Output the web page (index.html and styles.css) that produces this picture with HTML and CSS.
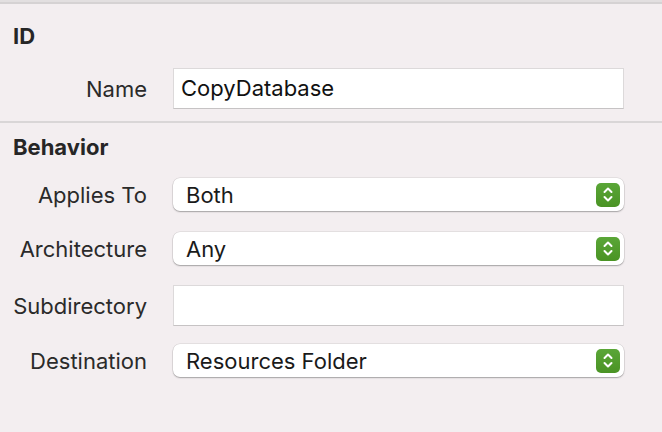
FILE: index.html
```html
<!DOCTYPE html>
<html>
<head>
<meta charset="utf-8">
<link rel="stylesheet" href="styles.css">
</head>
<body>
<div class="panel">
  <section class="section id-section">
    <h2 class="heading">ID</h2>
    <div class="row row-name">
      <label class="label">Name</label>
      <div class="field">CopyDatabase</div>
    </div>
  </section>
  <section class="section behavior-section">
    <h2 class="heading">Behavior</h2>
    <div class="row row-applies">
      <label class="label">Applies To</label>
      <div class="select"><span class="value">Both</span><span class="stepper"><svg width="12" height="17" viewBox="0 0 12 17"><path d="M2.5 6 L6 2.5 L9.5 6 M2.5 11 L6 14.5 L9.5 11" fill="none" stroke="#fff" stroke-width="2" stroke-linecap="round" stroke-linejoin="round"/></svg></span></div>
    </div>
    <div class="row row-arch">
      <label class="label">Architecture</label>
      <div class="select"><span class="value">Any</span><span class="stepper"><svg width="12" height="17" viewBox="0 0 12 17"><path d="M2.5 6 L6 2.5 L9.5 6 M2.5 11 L6 14.5 L9.5 11" fill="none" stroke="#fff" stroke-width="2" stroke-linecap="round" stroke-linejoin="round"/></svg></span></div>
    </div>
    <div class="row row-sub">
      <label class="label">Subdirectory</label>
      <div class="field"></div>
    </div>
    <div class="row row-dest">
      <label class="label">Destination</label>
      <div class="select"><span class="value">Resources Folder</span><span class="stepper"><svg width="12" height="17" viewBox="0 0 12 17"><path d="M2.5 6 L6 2.5 L9.5 6 M2.5 11 L6 14.5 L9.5 11" fill="none" stroke="#fff" stroke-width="2" stroke-linecap="round" stroke-linejoin="round"/></svg></span></div>
    </div>
  </section>
</div>
</body>
</html>
```
FILE: styles.css
```css
html, body {
  margin: 0;
  padding: 0;
  background: #f3eef0;
}
body {
  width: 662px;
  height: 432px;
  overflow: hidden;
  font-family: Inter, "Noto Sans", sans-serif;
  color: #262626;
}
.panel {
  border-top: 2px solid #e2dfe0;
}
.section {
  border-top: 2px solid #d5d2d3;
}
.behavior-section {
  border-top: 2px solid #d9d6d7;
}
.heading {
  margin: 0;
  font-size: 22px;
  font-weight: 700;
  line-height: 24px;
  padding-left: 13px;
  color: #262626;
}
.id-section .heading {
  padding-top: 20px;
}
.behavior-section .heading {
  padding-top: 12px;
}
.row {
  display: flex;
  align-items: center;
}
.label {
  width: 147px;
  text-align: right;
  font-size: 22px;
  line-height: 26px;
  color: #2a2a2a;
  flex: none;
}
.field {
  margin-left: 26px;
  width: 451px;
  height: 41px;
  box-sizing: border-box;
  background: #fff;
  border: 1px solid #dcd9da;
  border-bottom-color: #c6c3c4;
  font-size: 22px;
  line-height: 38px;
  padding-left: 7px;
  color: #111;
}
.row-name {
  margin-top: 20px;
  margin-bottom: 12px;
}
.select {
  margin-left: 26px;
  width: 451px;
  height: 33px;
  background: #fff;
  border-radius: 7px;
  box-shadow: 0 0 0 0.5px rgba(0,0,0,0.12), 0 1px 1.5px rgba(0,0,0,0.28);
  display: flex;
  align-items: center;
  justify-content: space-between;
}
.value {
  padding-left: 13px;
  font-size: 22px;
  line-height: 26px;
  color: #1a1a1a;
}
.stepper {
  width: 24px;
  height: 24px;
  margin-right: 4px;
  border-radius: 5px;
  background: linear-gradient(#5aa637, #4a9324);
  display: flex;
  align-items: center;
  justify-content: center;
}
.row-applies {
  margin-top: 19px;
}
.row-arch {
  margin-top: 21px;
}
.row-sub {
  margin-top: 20px;
}
.row-dest {
  margin-top: 18px;
}
```
